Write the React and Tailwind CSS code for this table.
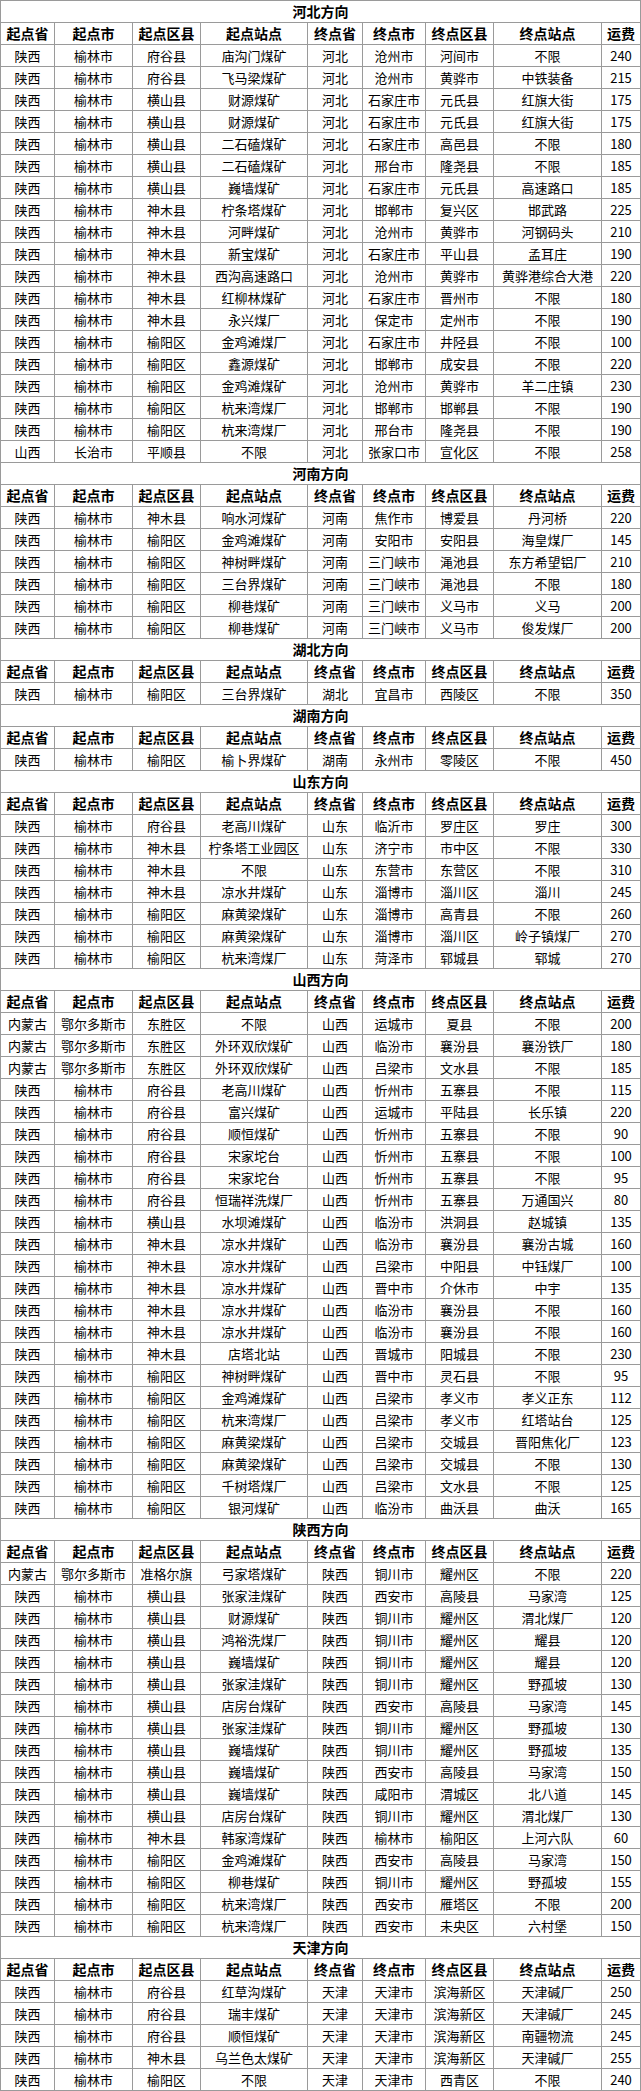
import React from 'react';

const headers = ['起点省', '起点市', '起点区县', '起点站点', '终点省', '终点市', '终点区县', '终点站点', '运费'];

const sections = [
  {
    title: '河北方向',
    rows: `陕西 榆林市 府谷县 庙沟门煤矿 河北 沧州市 河间市 不限 240
陕西 榆林市 府谷县 飞马梁煤矿 河北 沧州市 黄骅市 中铁装备 215
陕西 榆林市 横山县 财源煤矿 河北 石家庄市 元氏县 红旗大街 175
陕西 榆林市 横山县 财源煤矿 河北 石家庄市 元氏县 红旗大街 175
陕西 榆林市 横山县 二石磕煤矿 河北 石家庄市 高邑县 不限 180
陕西 榆林市 横山县 二石磕煤矿 河北 邢台市 隆尧县 不限 185
陕西 榆林市 横山县 巍墙煤矿 河北 石家庄市 元氏县 高速路口 185
陕西 榆林市 神木县 柠条塔煤矿 河北 邯郸市 复兴区 邯武路 225
陕西 榆林市 神木县 河畔煤矿 河北 沧州市 黄骅市 河钢码头 210
陕西 榆林市 神木县 新宝煤矿 河北 石家庄市 平山县 孟耳庄 190
陕西 榆林市 神木县 西沟高速路口 河北 沧州市 黄骅市 黄骅港综合大港 220
陕西 榆林市 神木县 红柳林煤矿 河北 石家庄市 晋州市 不限 180
陕西 榆林市 神木县 永兴煤厂 河北 保定市 定州市 不限 190
陕西 榆林市 榆阳区 金鸡滩煤厂 河北 石家庄市 井陉县 不限 100
陕西 榆林市 榆阳区 鑫源煤矿 河北 邯郸市 成安县 不限 220
陕西 榆林市 榆阳区 金鸡滩煤矿 河北 沧州市 黄骅市 羊二庄镇 230
陕西 榆林市 榆阳区 杭来湾煤厂 河北 邯郸市 邯郸县 不限 190
陕西 榆林市 榆阳区 杭来湾煤厂 河北 邢台市 隆尧县 不限 190
山西 长治市 平顺县 不限 河北 张家口市 宣化区 不限 258`,
  },
  {
    title: '河南方向',
    rows: `陕西 榆林市 神木县 响水河煤矿 河南 焦作市 博爱县 丹河桥 220
陕西 榆林市 榆阳区 金鸡滩煤矿 河南 安阳市 安阳县 海皇煤厂 145
陕西 榆林市 榆阳区 神树畔煤矿 河南 三门峡市 渑池县 东方希望铝厂 210
陕西 榆林市 榆阳区 三台界煤矿 河南 三门峡市 渑池县 不限 180
陕西 榆林市 榆阳区 柳巷煤矿 河南 三门峡市 义马市 义马 200
陕西 榆林市 榆阳区 柳巷煤矿 河南 三门峡市 义马市 俊发煤厂 200`,
  },
  {
    title: '湖北方向',
    rows: `陕西 榆林市 榆阳区 三台界煤矿 湖北 宜昌市 西陵区 不限 350`,
  },
  {
    title: '湖南方向',
    rows: `陕西 榆林市 榆阳区 榆卜界煤矿 湖南 永州市 零陵区 不限 450`,
  },
  {
    title: '山东方向',
    rows: `陕西 榆林市 府谷县 老高川煤矿 山东 临沂市 罗庄区 罗庄 300
陕西 榆林市 神木县 柠条塔工业园区 山东 济宁市 市中区 不限 330
陕西 榆林市 神木县 不限 山东 东营市 东营区 不限 310
陕西 榆林市 神木县 凉水井煤矿 山东 淄博市 淄川区 淄川 245
陕西 榆林市 榆阳区 麻黄梁煤矿 山东 淄博市 高青县 不限 260
陕西 榆林市 榆阳区 麻黄梁煤矿 山东 淄博市 淄川区 岭子镇煤厂 270
陕西 榆林市 榆阳区 杭来湾煤厂 山东 菏泽市 郓城县 郓城 270`,
  },
  {
    title: '山西方向',
    rows: `内蒙古 鄂尔多斯市 东胜区 不限 山西 运城市 夏县 不限 200
内蒙古 鄂尔多斯市 东胜区 外环双欣煤矿 山西 临汾市 襄汾县 襄汾铁厂 180
内蒙古 鄂尔多斯市 东胜区 外环双欣煤矿 山西 吕梁市 文水县 不限 185
陕西 榆林市 府谷县 老高川煤矿 山西 忻州市 五寨县 不限 115
陕西 榆林市 府谷县 富兴煤矿 山西 运城市 平陆县 长乐镇 220
陕西 榆林市 府谷县 顺恒煤矿 山西 忻州市 五寨县 不限 90
陕西 榆林市 府谷县 宋家坨台 山西 忻州市 五寨县 不限 100
陕西 榆林市 府谷县 宋家坨台 山西 忻州市 五寨县 不限 95
陕西 榆林市 府谷县 恒瑞祥洗煤厂 山西 忻州市 五寨县 万通国兴 80
陕西 榆林市 横山县 水坝滩煤矿 山西 临汾市 洪洞县 赵城镇 135
陕西 榆林市 神木县 凉水井煤矿 山西 临汾市 襄汾县 襄汾古城 160
陕西 榆林市 神木县 凉水井煤矿 山西 吕梁市 中阳县 中钰煤厂 100
陕西 榆林市 神木县 凉水井煤矿 山西 晋中市 介休市 中宇 135
陕西 榆林市 神木县 凉水井煤矿 山西 临汾市 襄汾县 不限 160
陕西 榆林市 神木县 凉水井煤矿 山西 临汾市 襄汾县 不限 160
陕西 榆林市 神木县 店塔北站 山西 晋城市 阳城县 不限 230
陕西 榆林市 榆阳区 神树畔煤矿 山西 晋中市 灵石县 不限 95
陕西 榆林市 榆阳区 金鸡滩煤矿 山西 吕梁市 孝义市 孝义正东 112
陕西 榆林市 榆阳区 杭来湾煤厂 山西 吕梁市 孝义市 红塔站台 125
陕西 榆林市 榆阳区 麻黄梁煤矿 山西 吕梁市 交城县 晋阳焦化厂 123
陕西 榆林市 榆阳区 麻黄梁煤矿 山西 吕梁市 交城县 不限 130
陕西 榆林市 榆阳区 千树塔煤厂 山西 吕梁市 文水县 不限 125
陕西 榆林市 榆阳区 银河煤矿 山西 临汾市 曲沃县 曲沃 165`,
  },
  {
    title: '陕西方向',
    rows: `内蒙古 鄂尔多斯市 准格尔旗 弓家塔煤矿 陕西 铜川市 耀州区 不限 220
陕西 榆林市 横山县 张家洼煤矿 陕西 西安市 高陵县 马家湾 125
陕西 榆林市 横山县 财源煤矿 陕西 铜川市 耀州区 渭北煤厂 120
陕西 榆林市 横山县 鸿裕洗煤厂 陕西 铜川市 耀州区 耀县 120
陕西 榆林市 横山县 巍墙煤矿 陕西 铜川市 耀州区 耀县 120
陕西 榆林市 横山县 张家洼煤矿 陕西 铜川市 耀州区 野孤坡 130
陕西 榆林市 横山县 店房台煤矿 陕西 西安市 高陵县 马家湾 145
陕西 榆林市 横山县 张家洼煤矿 陕西 铜川市 耀州区 野孤坡 130
陕西 榆林市 横山县 巍墙煤矿 陕西 铜川市 耀州区 野孤坡 135
陕西 榆林市 横山县 巍墙煤矿 陕西 西安市 高陵县 马家湾 150
陕西 榆林市 横山县 巍墙煤矿 陕西 咸阳市 渭城区 北八道 145
陕西 榆林市 横山县 店房台煤矿 陕西 铜川市 耀州区 渭北煤厂 130
陕西 榆林市 神木县 韩家湾煤矿 陕西 榆林市 榆阳区 上河六队 60
陕西 榆林市 榆阳区 金鸡滩煤矿 陕西 西安市 高陵县 马家湾 150
陕西 榆林市 榆阳区 柳巷煤矿 陕西 铜川市 耀州区 野孤坡 155
陕西 榆林市 榆阳区 杭来湾煤厂 陕西 西安市 雁塔区 不限 200
陕西 榆林市 榆阳区 杭来湾煤厂 陕西 西安市 未央区 六村堡 150`,
  },
  {
    title: '天津方向',
    rows: `陕西 榆林市 府谷县 红草沟煤矿 天津 天津市 滨海新区 天津碱厂 250
陕西 榆林市 府谷县 瑞丰煤矿 天津 天津市 滨海新区 天津碱厂 245
陕西 榆林市 府谷县 顺恒煤矿 天津 天津市 滨海新区 南疆物流 245
陕西 榆林市 神木县 乌兰色太煤矿 天津 天津市 滨海新区 天津碱厂 255
陕西 榆林市 榆阳区 不限 天津 天津市 西青区 不限 240`,
  },
];

const rowGrid =
  'grid grid-cols-[54px_78px_68px_107px_55px_63px_68px_108px_1fr] h-[22px] border-b border-[#9a9a9a]';

const Row = ({ cells, head }) => (
  <div className={rowGrid}>
    {cells.map((c, i) => (
      <div
        key={i}
        className={`flex items-center justify-center border-r border-[#9a9a9a] whitespace-nowrap overflow-hidden ${
          head ? 'text-[14px] font-bold' : 'text-[13px]'
        }`}
      >
        {c}
      </div>
    ))}
  </div>
);

const App = () => {
  return (
    <div className="w-[641px] bg-white text-black font-['Noto_Sans_CJK_SC',sans-serif]">
      <div className="border-l border-t border-[#9a9a9a]">
        {sections.map((s) => (
          <div key={s.title}>
            {/* section title */}
            <div className="h-[22px] flex items-center justify-center border-b border-r border-[#9a9a9a] text-[14px] font-bold">
              {s.title}
            </div>
            <Row cells={headers} head />
            {s.rows.split('\n').map((line, i) => (
              <Row key={i} cells={line.trim().split(' ')} />
            ))}
          </div>
        ))}
      </div>
    </div>
  );
};

export default App;
